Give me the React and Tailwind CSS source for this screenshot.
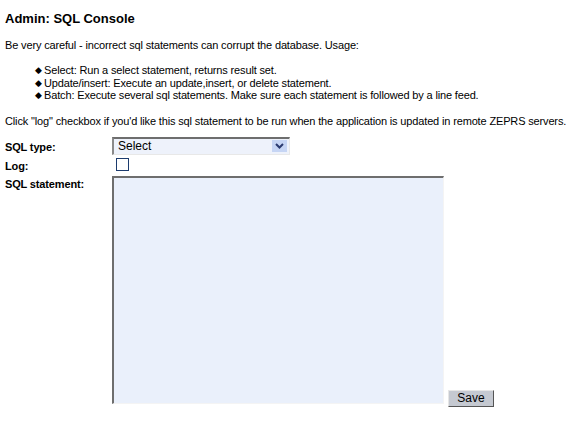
import React from 'react';

const App = () => {
  return (
    <div className="w-[576px] h-[440px] bg-white text-black font-['Liberation_Sans',Arial,sans-serif] text-[11px] leading-[13px] tracking-[-0.15px] px-[5px] pt-[11px]">
      <h1 className="text-[13px] font-bold leading-[15px] tracking-normal">Admin: SQL Console</h1>
      <p className="mt-[13px] whitespace-nowrap">Be very careful - incorrect sql statements can corrupt the database. Usage:</p>
      <ul className="mt-[12px] pl-[39px] leading-[12.5px]">
        <li className="flex items-start whitespace-nowrap">
          <span className="w-[9px] -ml-[9px] text-[9px]">◆</span>Select: Run a select statement, returns result set.
        </li>
        <li className="flex items-start whitespace-nowrap">
          <span className="w-[9px] -ml-[9px] text-[9px]">◆</span>Update/insert: Execute an update,insert, or delete statement.
        </li>
        <li className="flex items-start whitespace-nowrap">
          <span className="w-[9px] -ml-[9px] text-[9px]">◆</span>Batch: Execute several sql statements. Make sure each statement is followed by a line feed.
        </li>
      </ul>
      <p className="mt-[13px] whitespace-nowrap">Click "log" checkbox if you'd like this sql statement to be run when the application is updated in remote ZEPRS servers.</p>

      <div className="mt-[9px] grid grid-cols-[107px_auto] gap-y-[3px] items-start">
        <div className="font-bold pt-[4px]">SQL type:</div>
        <div className="w-[178px] h-[18px] bg-[#eef2fb] border-t-2 border-l-2 border-t-[#6e6e6e] border-l-[#8a8a8a] border-b border-r border-b-[#e8e8e8] border-r-[#e8e8e8] flex items-center justify-between pl-[4px] pr-[2px]">
          <span className="text-[12px] tracking-normal">Select</span>
          <span className="w-[15px] h-[12px] bg-[#c6d5f4] flex items-center justify-center">
            <svg width="9" height="6" viewBox="0 0 9 6">
              <path d="M1 1 L4.5 4.5 L8 1" stroke="#2b3b70" strokeWidth="2" fill="none" />
            </svg>
          </span>
        </div>

        <div className="font-bold pt-[2px]">Log:</div>
        <div className="pl-[4px] h-[15px]">
          <div className="w-[13px] h-[13px] border border-[#1c3b6e] bg-white"></div>
        </div>

        <div className="font-bold pt-[2px]">SQL statement:</div>
        <div className="flex items-end gap-[4px]">
          <div className="w-[332px] h-[228px] bg-[#eaf0fb] border-t-2 border-l-2 border-t-[#6e6e6e] border-l-[#6e6e6e] border-b border-r border-b-[#f4f4f4] border-r-[#f4f4f4]"></div>
          <button className="w-[46px] h-[17px] mb-[-3px] bg-[#c5c9d1] border border-t-[#e6e6e6] border-l-[#e6e6e6] border-b-[#555] border-r-[#555] text-[12px] leading-[14px] tracking-normal text-black">Save</button>
        </div>
      </div>
    </div>
  );
};

export default App;
